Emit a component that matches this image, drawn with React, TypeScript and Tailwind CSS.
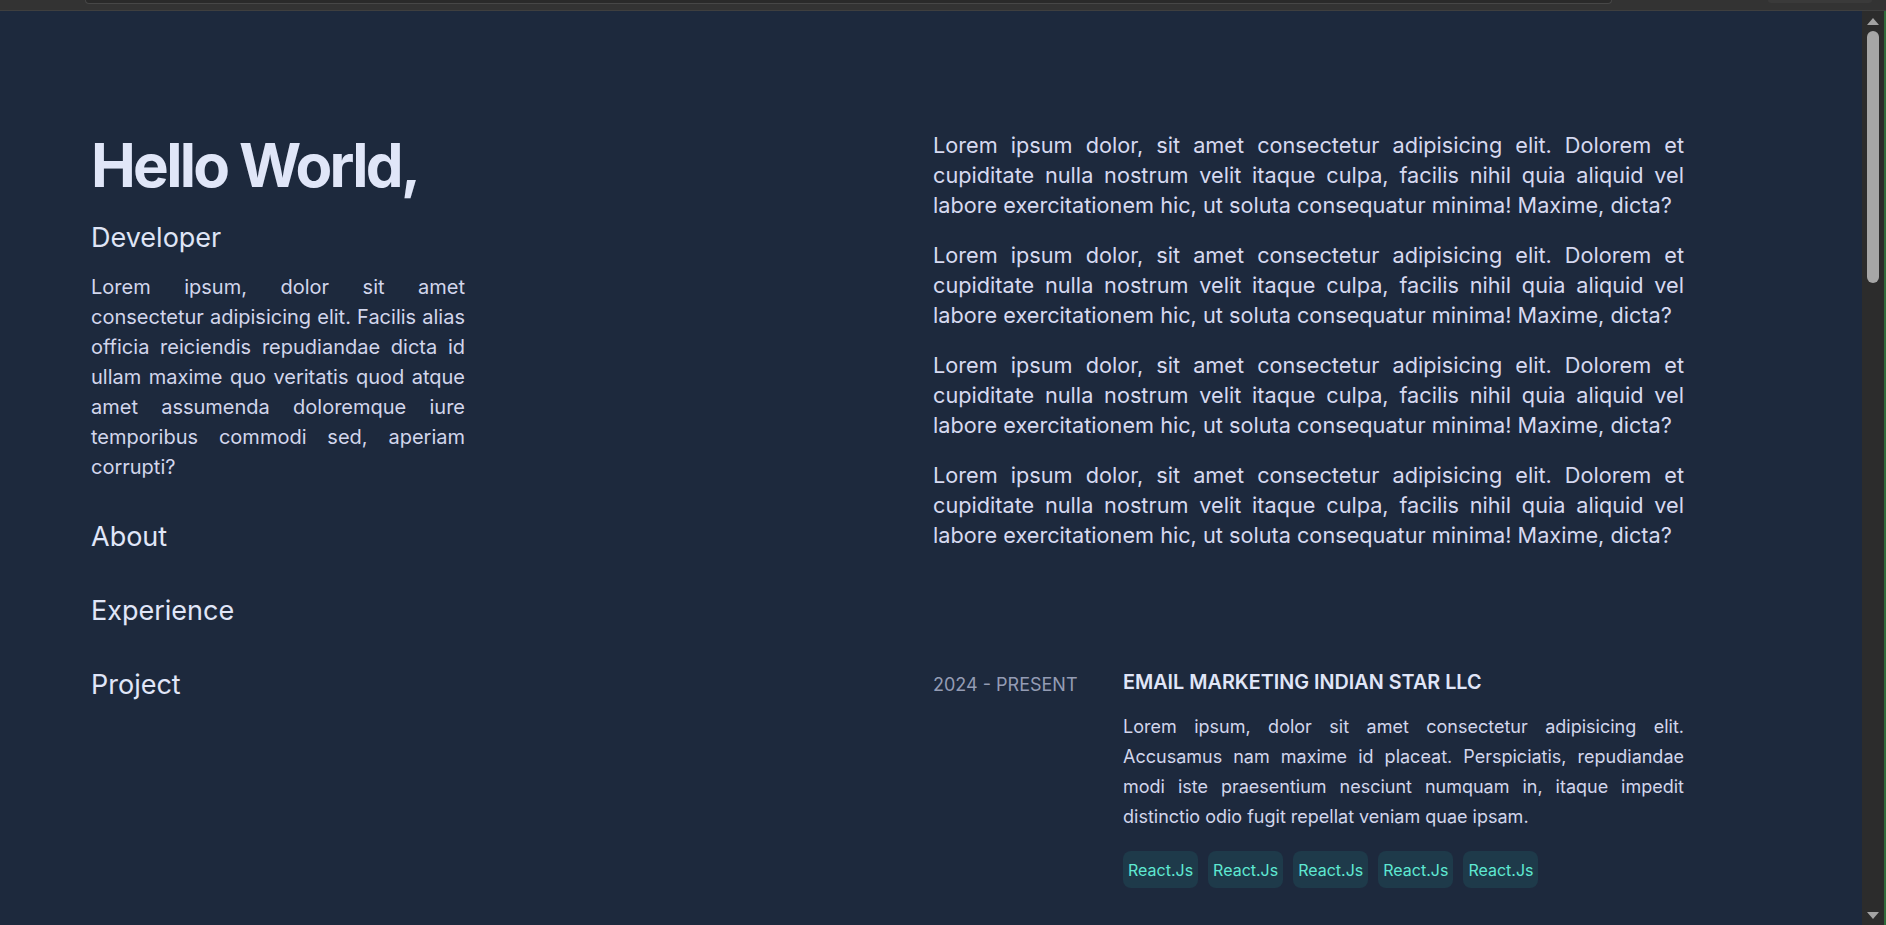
import React from "react";

const paragraph =
  "Lorem ipsum dolor, sit amet consectetur adipisicing elit. Dolorem et cupiditate nulla nostrum velit itaque culpa, facilis nihil quia aliquid vel labore exercitationem hic, ut soluta consequatur minima! Maxime, dicta?";

const tags = ["React.Js", "React.Js", "React.Js", "React.Js", "React.Js"];

function TopStrip() {
  return (
    <div className="h-[11px] shrink-0 bg-[#333333] border-b border-[#3f3f3f] flex items-start">
      <div className="ml-[85px] w-[1527px] h-[4px] bg-[#2a2a2a] border-x border-b border-[#474747] rounded-b-[8px]" />
      <div className="ml-[156px] w-[104px] h-[3px] bg-[#3a3a3a] rounded-b-[6px]" />
    </div>
  );
}

function Scrollbar() {
  return (
    <div className="w-[24px] shrink-0 bg-[#2c2c2c] flex">
      <div className="w-[22px] flex flex-col items-center pt-[6px] pb-[5px]">
        <svg width="14" height="9" viewBox="0 0 14 9" className="shrink-0">
          <path d="M7 1 L13 8 L1 8 Z" fill="#a3a3a3" />
        </svg>
        <div className="mt-[5px] w-[12px] h-[252px] rounded-full bg-[#a6a6a6]" />
        <div className="flex-1" />
        <svg width="14" height="9" viewBox="0 0 14 9" className="shrink-0">
          <path d="M1 1 L13 1 L7 8 Z" fill="#a3a3a3" />
        </svg>
      </div>
      <div className="w-[2px] bg-[#2f6b3a]" />
    </div>
  );
}

export default function App() {
  return (
    <div
      className="h-[925px] w-full overflow-hidden flex flex-col bg-[#333333]"
      style={{ fontFamily: "Inter, 'Noto Sans', sans-serif" }}
    >
      <TopStrip />
      <div className="flex flex-1 min-h-0">
        <main className="flex-1 bg-slate-800 flex pl-[91px] overflow-hidden">
          <header className="w-[842px] shrink-0 pt-[124px]">
            <div className="w-[374px]">
              <h1 className="text-[60px] leading-[60px] font-bold tracking-[-0.045em] text-[#e0e6f8]">
                Hello World,
              </h1>
              <h2 className="mt-[25px] text-[27px] leading-[36px] text-[#dfe4f5]">
                Developer
              </h2>
              <p className="mt-[16px] text-[20px] leading-[30px] text-justify text-[#d2d6ec]">
                Lorem ipsum, dolor sit amet consectetur adipisicing elit. Facilis alias
                officia reiciendis repudiandae dicta id ullam maxime quo veritatis quod
                atque amet assumenda doloremque iure temporibus commodi sed, aperiam
                corrupti?
              </p>
              <nav className="mt-[37px] flex flex-col gap-[38px] text-[27px] leading-[36px] text-[#e0e6f8]">
                <a href="#about">About</a>
                <a href="#experience">Experience</a>
                <a href="#project">Project</a>
              </nav>
            </div>
          </header>

          <div className="w-[751px] shrink-0 pt-[119px]">
            <section className="flex flex-col gap-[20px]">
              {[0, 1, 2, 3].map((i) => (
                <p
                  key={i}
                  className="text-[21.7px] leading-[30px] text-justify text-[#d6d9f0]"
                >
                  {paragraph}
                </p>
              ))}
            </section>

            <section className="mt-[118px] grid grid-cols-[190px_1fr]">
              <div className="pt-[3px] text-[18px] leading-[28px] text-[#949cb4]">
                2024 - PRESENT
              </div>
              <div>
                <h3 className="text-[19.8px] leading-[28px] font-semibold text-[#e0e6f8]">
                  EMAIL MARKETING INDIAN STAR LLC
                </h3>
                <p className="mt-[16px] text-[18px] leading-[30px] text-justify text-[#d2d6ec]">
                  Lorem ipsum, dolor sit amet consectetur adipisicing elit. Accusamus nam
                  maxime id placeat. Perspiciatis, repudiandae modi iste praesentium
                  nesciunt numquam in, itaque impedit distinctio odio fugit repellat veniam
                  quae ipsam.
                </p>
                <ul className="mt-[19px] flex gap-[10px]">
                  {tags.map((t, i) => (
                    <li
                      key={i}
                      className="h-[37px] px-[5px] flex items-center rounded-[8px] bg-[#1e3a4a] text-[16px] text-[#5ee8d2]"
                    >
                      {t}
                    </li>
                  ))}
                </ul>
              </div>
            </section>
          </div>
        </main>
        <Scrollbar />
      </div>
    </div>
  );
}
